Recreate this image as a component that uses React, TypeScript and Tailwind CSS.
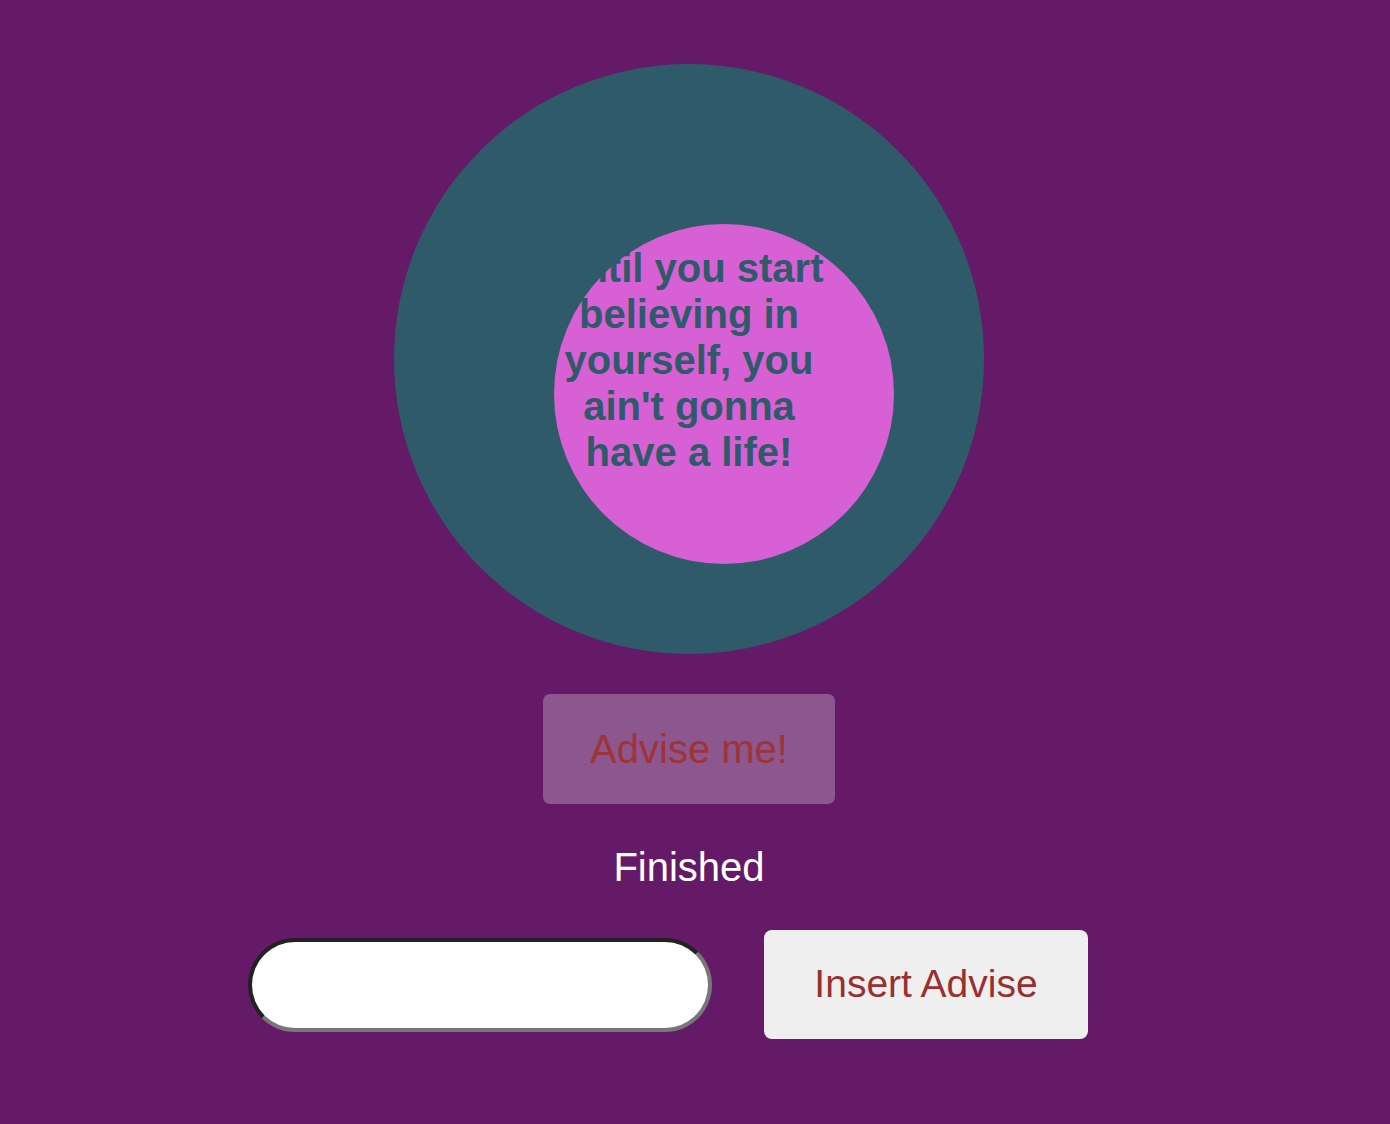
export default function App() {
  const advice = "Until you start believing in yourself, you ain't gonna have a life!"

  return (
    <div className="min-h-[1124px] w-full bg-[#651a67] flex flex-col items-center pt-[64px] pr-[12px] font-['Liberation_Sans',Arial,sans-serif]">
      {/* outer ring */}
      <div className="relative w-[590px] h-[590px] rounded-full bg-[#2f5a69] flex items-center justify-center shrink-0">
        <div className="absolute left-[160px] top-[160px] w-[340px] h-[340px] rounded-full bg-[#d760d4]" />
        <p className="relative w-[285px] text-center text-[40px] leading-[46px] font-bold text-[#2f5a69] mt-[2px]">
          {advice}
        </p>
      </div>

      <button className="mt-[40px] w-[292px] h-[110px] rounded-[7px] bg-[#8c568e] text-[40px] text-[#9f3436]">
        Advise me!
      </button>

      <p className="mt-[40px] text-[40px] leading-[46px] text-white">Finished</p>

      <div className="mt-[40px] flex items-center gap-[52px] ml-[-42px]">
        <input
          type="text"
          className="w-[464px] h-[94px] rounded-full bg-white border-4 border-t-[#222222] border-l-[#222222] border-b-[#777777] border-r-[#777777] outline-none px-6 text-2xl"
        />
        <button className="w-[324px] h-[109px] rounded-[8px] bg-[#efefef] text-[39px] text-[#983030]">
          Insert Advise
        </button>
      </div>
    </div>
  )
}
